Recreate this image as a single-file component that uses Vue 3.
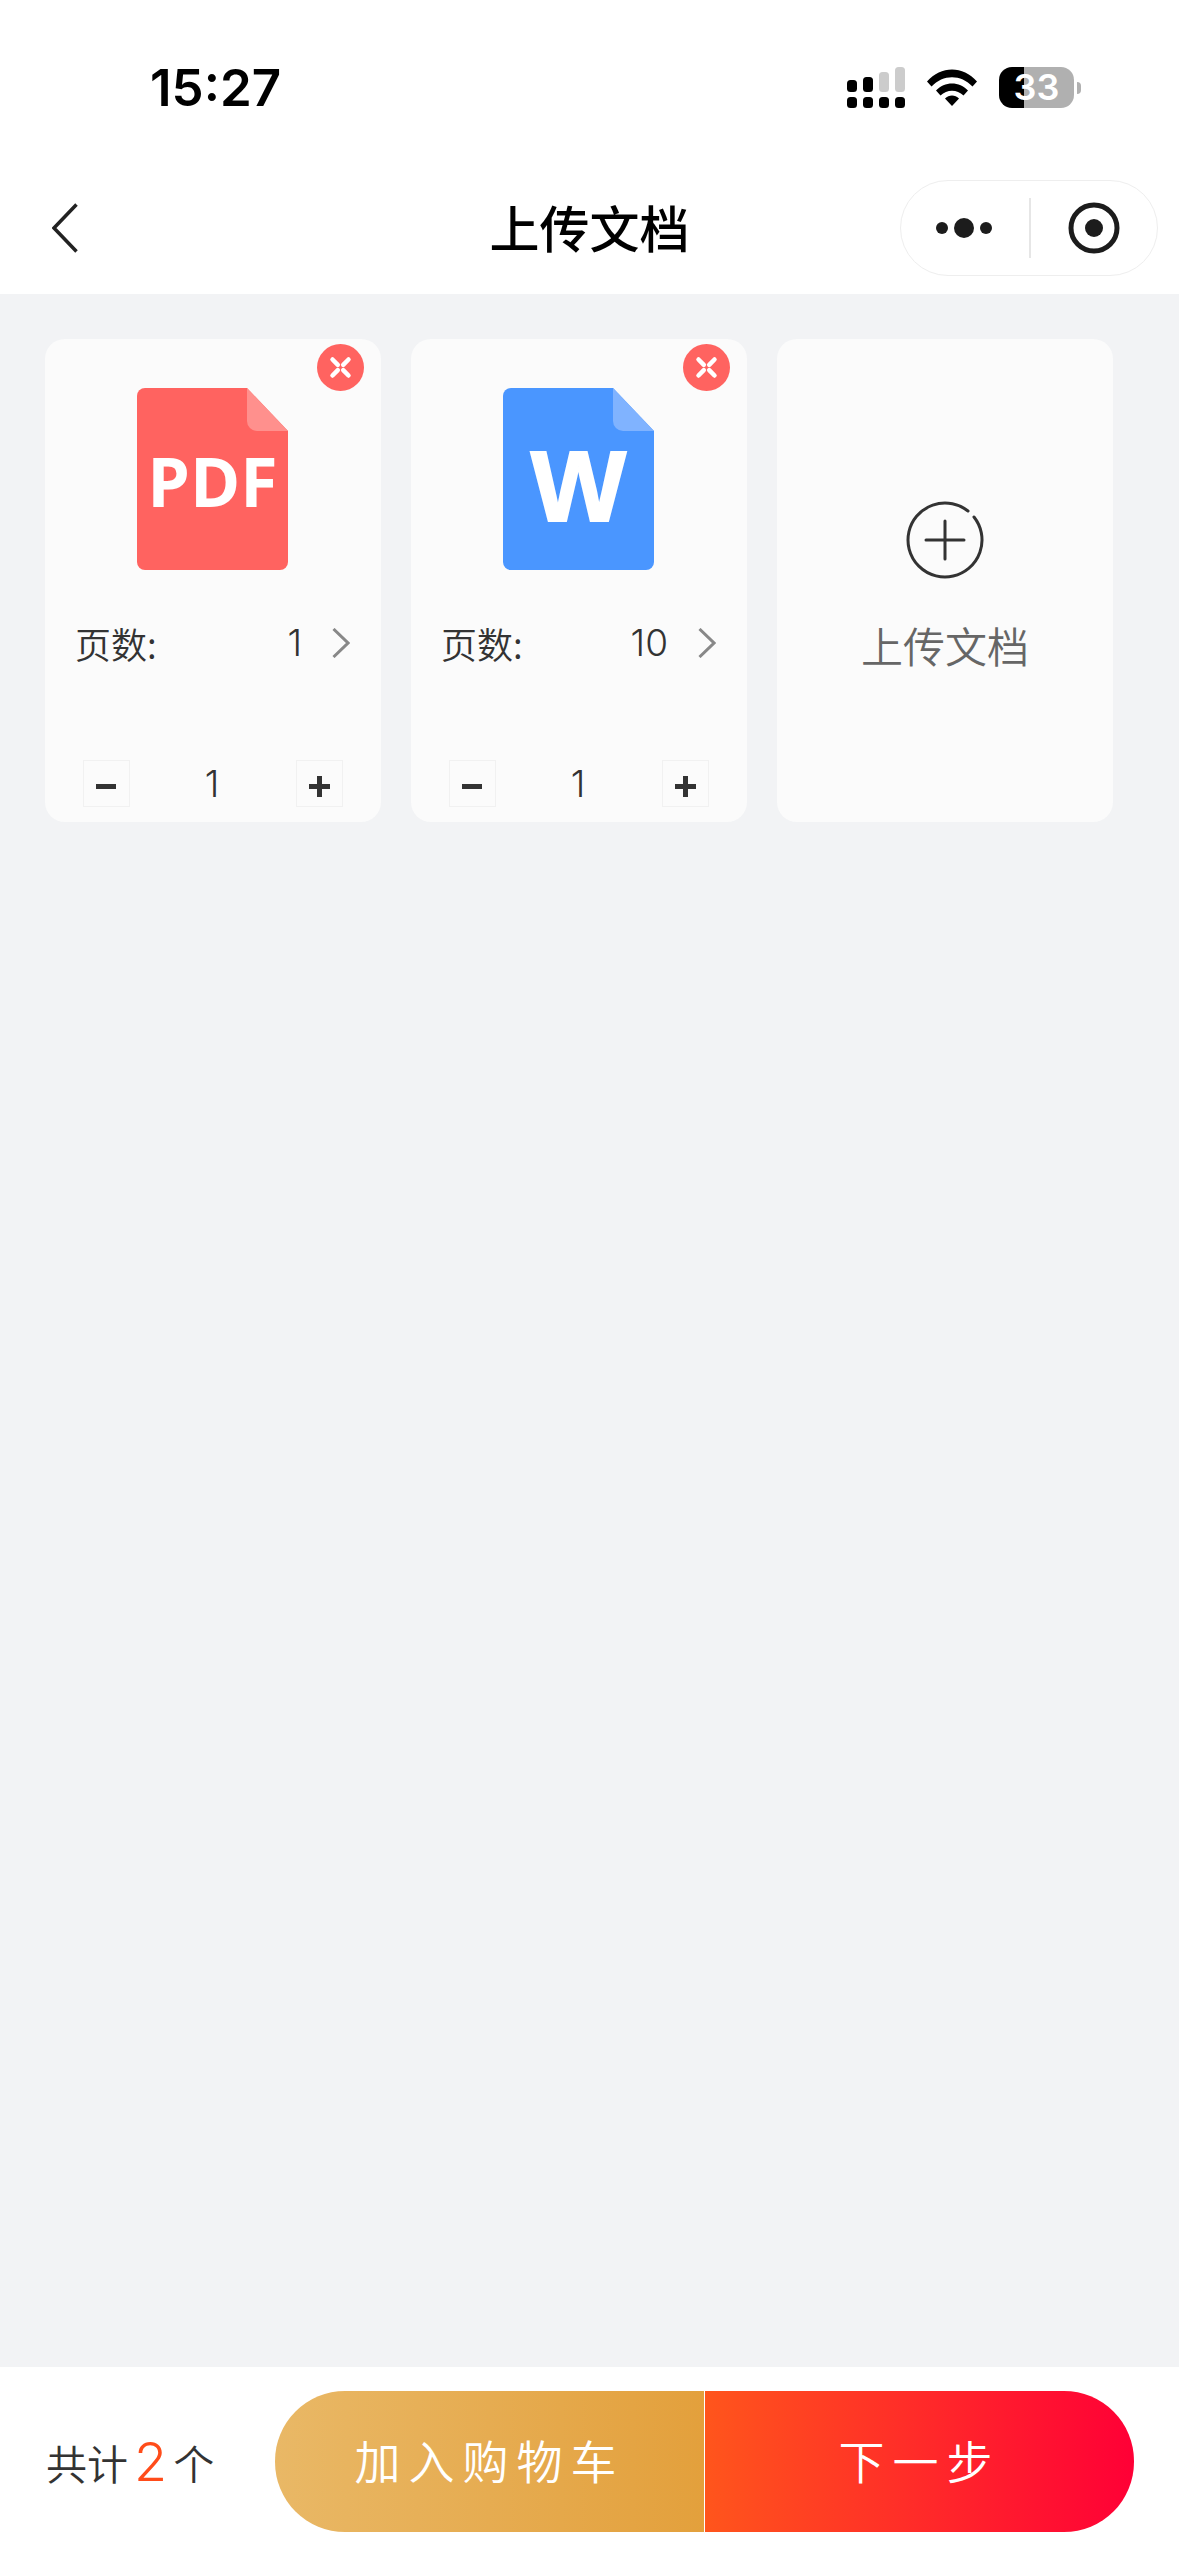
<script setup>
import { ref } from 'vue';

const docs = ref([
  { id: 1, type: 'pdf', pages: 1, copies: 1 },
  { id: 2, type: 'word', pages: 10, copies: 1 }
]);

const changeCopies = (doc, step) => {
  doc.copies = Math.max(1, doc.copies + step);
};

const removeDoc = (id) => {
  docs.value = docs.value.filter((d) => d.id !== id);
};
</script>

<template>
  <div class="page">
    <div class="status-bar">
      <span class="time">15:27</span>
      <div class="status-icons">
        <svg class="signal" width="58" height="41" viewBox="0 0 58 41">
          <rect x="0" y="13" width="10" height="12" rx="3.5" fill="#000" />
          <rect x="16" y="10" width="10" height="15" rx="3.5" fill="#000" />
          <rect x="32" y="5" width="10" height="20" rx="3.5" fill="#ccc" />
          <rect x="48" y="0" width="10" height="25" rx="3.5" fill="#ccc" />
          <rect x="0" y="30" width="10" height="11" rx="3.5" fill="#000" />
          <rect x="16" y="30" width="10" height="11" rx="3.5" fill="#000" />
          <rect x="32" y="30" width="10" height="11" rx="3.5" fill="#000" />
          <rect x="48" y="30" width="10" height="11" rx="3.5" fill="#000" />
        </svg>
        <svg class="wifi" width="50" height="37" viewBox="0 0 50 37">
          <path d="M0 12.500C14 -3.500 36 -3.500 50 12.500L45.500 17.500C34 5 16 5 4.500 17.500Z" fill="#000" />
          <path d="M9 21.500C17.500 12 32.500 12 41 21.500L36.500 26.500C30 20 20 20 13.500 26.500Z" fill="#000" />
          <path d="M18 29.500C22 25.500 28 25.500 32 29.500L25 37Z" fill="#000" />
        </svg>
        <div class="battery">
          <div class="battery-body">
            <span class="battery-text">33</span>
          </div>
          <div class="battery-nub"></div>
        </div>
      </div>
    </div>

    <div class="nav">
      <div class="nav-left">
        <svg width="26" height="50" viewBox="0 0 26 50">
          <path d="M24.500 1.500L2 25L24.500 48.500" fill="none" stroke="#222" stroke-width="3.500" />
        </svg>
      </div>
      <div class="nav-title">上传文档</div>
      <div class="nav-right">
        <div class="capsule">
          <div class="capsule-part more">
            <svg width="58" height="22" viewBox="0 0 58 22">
              <circle cx="6" cy="11" r="6" fill="#1c1c1c" />
              <circle cx="28" cy="11" r="10" fill="#1c1c1c" />
              <circle cx="50" cy="11" r="6" fill="#1c1c1c" />
            </svg>
          </div>
          <div class="capsule-line"></div>
          <div class="capsule-part">
            <svg width="52" height="52" viewBox="0 0 52 52">
              <circle cx="26" cy="26" r="23" fill="none" stroke="#1c1c1c" stroke-width="5" />
              <circle cx="26" cy="26" r="9" fill="#1c1c1c" />
            </svg>
          </div>
        </div>
      </div>
    </div>

    <div class="content">
      <div v-for="doc in docs" :key="doc.id" class="card">
        <button class="close" @click="removeDoc(doc.id)">
          <svg width="47" height="47" viewBox="0 0 47 47">
            <circle cx="23.500" cy="23.500" r="23.500" fill="#ff6360" />
            <path d="M15.500 15.500L20.800 20.800M31.500 15.500L26.200 20.800M15.500 31.500L20.800 26.200M31.500 31.500L26.200 26.200" stroke="#fff" stroke-width="4.500" stroke-linecap="round" />
          </svg>
        </button>
        <svg class="file-icon" width="151" height="182" viewBox="0 0 151 182">
          <template v-if="doc.type === 'pdf'">
            <path d="M8 0H110L151 43V174A8 8 0 0 1 143 182H8A8 8 0 0 1 0 174V8A8 8 0 0 1 8 0Z" fill="#ff6360" />
            <path d="M110 0L151 43H120A10 10 0 0 1 110 33Z" fill="#ff908d" />
            <text x="75.500" y="119" text-anchor="middle" class="pdf-text">PDF</text>
          </template>
          <template v-else>
            <path d="M8 0H110L151 43V174A8 8 0 0 1 143 182H8A8 8 0 0 1 0 174V8A8 8 0 0 1 8 0Z" fill="#4a96ff" />
            <path d="M110 0L151 43H120A10 10 0 0 1 110 33Z" fill="#80b3ff" />
            <text x="75.500" y="133" text-anchor="middle" class="word-text">W</text>
          </template>
        </svg>
        <div class="pages-row">
          <span class="pages-label">页数:</span>
          <span class="pages-value">{{ doc.pages }}</span>
          <svg width="18" height="30" viewBox="0 0 18 30">
            <path d="M1.500 1L16 15L1.500 29" fill="none" stroke="#888" stroke-width="3" />
          </svg>
        </div>
        <div class="stepper">
          <button class="step-btn minus" @click="changeCopies(doc, -1)">
            <svg width="20" height="5" viewBox="0 0 20 5"><rect width="20" height="5" fill="#333" /></svg>
          </button>
          <span class="step-value">{{ doc.copies }}</span>
          <button class="step-btn" @click="changeCopies(doc, 1)">
            <svg width="21" height="21" viewBox="0 0 21 21"><path d="M0 10.500H21M10.500 0V21" stroke="#333" stroke-width="5" /></svg>
          </button>
        </div>
      </div>

      <div class="card upload">
        <svg width="80" height="80" viewBox="0 0 80 80">
          <path d="M63 11A37 37 0 1 0 69 17" fill="none" stroke="#333" stroke-width="3" stroke-linecap="round" />
          <path d="M21 40H59M40 21V59" stroke="#333" stroke-width="3" stroke-linecap="round" />
        </svg>
        <div class="upload-text">上传文档</div>
      </div>
    </div>

    <div class="footer">
      <div class="total">
        <span>共计</span><span class="total-num">{{ docs.length }}</span><span>个</span>
      </div>
      <div class="actions">
        <button class="action-btn cart">加入购物车</button>
        <button class="action-btn next">下一步</button>
      </div>
    </div>
  </div>
</template>

<style scoped>
.page {
  width: 1179px;
  height: 2556px;
  display: flex;
  flex-direction: column;
  background: #f2f3f5;
  font-family: "Noto Sans CJK SC", "Noto Sans", sans-serif;
  color: #333;
  overflow: hidden;
}

.status-bar {
  display: flex;
  justify-content: space-between;
  align-items: center;
  height: 41px;
  padding: 67px 98px 16px 150px;
  background: #fff;
}

.time {
  font-family: Inter, sans-serif;
  font-size: 51px;
  font-weight: 600;
  color: #000;
}

.status-icons {
  display: flex;
  align-items: center;
  gap: 22px;
}

.battery {
  display: flex;
  align-items: center;
  gap: 3px;
}

.battery-body {
  width: 75px;
  height: 41px;
  border-radius: 13px;
  background: linear-gradient(90deg, #000 25px, #b0b0b0 25px);
  display: flex;
  align-items: center;
  justify-content: center;
}

.battery-text {
  font-family: Inter, sans-serif;
  font-size: 36px;
  font-weight: 600;
  color: #fff;
  line-height: 41px;
}

.battery-nub {
  width: 4px;
  height: 12px;
  border-radius: 0 6px 6px 0;
  background: #b0b0b0;
}

.nav {
  display: grid;
  grid-template-columns: 1fr auto 1fr;
  align-items: center;
  padding: 56px 0 18px;
  background: #fff;
}

.nav-left {
  padding-left: 52px;
  display: flex;
  align-items: center;
}

.nav-title {
  font-size: 50px;
  font-weight: 500;
  line-height: 92px;
  padding-bottom: 4px;
  color: #000;
}

.nav-right {
  display: flex;
  justify-content: flex-end;
  padding-right: 21px;
}

.capsule {
  display: flex;
  align-items: center;
  box-sizing: border-box;
  width: 258px;
  height: 96px;
  border: 1.500px solid #eeeeee;
  border-radius: 48px;
  background: #fff;
}

.capsule-part {
  flex: 1;
  display: flex;
  align-items: center;
  justify-content: center;
}

.capsule-part.more {
  flex: 0 0 128px;
}

.capsule-line {
  width: 1.500px;
  height: 60px;
  background: #e6e6e6;
}

.content {
  flex: 1;
  display: grid;
  grid-template-columns: repeat(3, 336px);
  grid-auto-rows: 483px;
  gap: 30px;
  padding: 45px;
}

.card {
  position: relative;
  display: flex;
  flex-direction: column;
  align-items: center;
  border-radius: 20px;
  background: #fbfbfb;
}

.close {
  position: absolute;
  top: 5px;
  right: 17px;
  width: 47px;
  height: 47px;
  padding: 0;
  border: none;
  background: none;
  display: flex;
}

.file-icon {
  flex: none;
  margin: 49px 1px 0 0;
}

.pdf-text {
  font-family: "Open Sans", sans-serif;
  font-size: 68px;
  font-weight: 700;
  fill: #fff;
}

.word-text {
  font-family: "Liberation Sans", sans-serif;
  font-size: 101px;
  font-weight: 700;
  fill: #fff;
  stroke: #fff;
  stroke-width: 2px;
}

.pages-row {
  align-self: stretch;
  display: flex;
  align-items: center;
  height: 50px;
  margin-top: 48px;
  padding: 0 31px 0 30px;
  font-size: 36px;
  font-weight: 350;
  line-height: 50px;
}

.pages-label {
  flex: 1;
}

.pages-value {
  margin-right: 30px;
  font-family: Inter, sans-serif;
  font-size: 37px;
  font-weight: 300;
}

.stepper {
  align-self: stretch;
  display: flex;
  align-items: center;
  justify-content: space-between;
  margin-top: auto;
  padding: 0 38px 15px;
}

.step-btn {
  display: flex;
  align-items: center;
  justify-content: center;
  box-sizing: border-box;
  width: 47px;
  height: 47px;
  padding: 5px 0 0;
  border: 1.500px solid #f1f1f1;
  background: none;
}

.step-btn.minus {
  padding-right: 2px;
}

.step-value {
  font-family: Inter, sans-serif;
  font-size: 37px;
  font-weight: 300;
  line-height: 47px;
  margin-right: 2px;
}

.upload {
  justify-content: flex-start;
  padding-top: 161px;
  box-sizing: border-box;
}

.upload-text {
  margin-top: 37px;
  font-size: 42px;
  font-weight: 350;
  line-height: 56px;
  color: #666;
}

.footer {
  display: flex;
  align-items: center;
  justify-content: space-between;
  height: 189px;
  padding: 0 45px 0 46px;
  box-sizing: border-box;
  background: #fff;
}

.total {
  display: flex;
  align-items: center;
  gap: 6px;
  font-size: 41px;
  font-weight: 350;
}

.total-num {
  font-family: Inter, sans-serif;
  font-size: 54px;
  font-weight: 300;
  color: #ff4c1a;
}

.actions {
  display: flex;
  gap: 1px;
}

.action-btn {
  height: 141px;
  width: 429px;
  padding: 0 0 5px;
  border: none;
  font-family: inherit;
  font-size: 46px;
  font-weight: 350;
  letter-spacing: 8px;
  color: #fff;
}

.cart {
  border-radius: 70px 0 0 70px;
  background: linear-gradient(90deg, #e9b866, #e3a03c);
}

.next {
  border-radius: 0 70px 70px 0;
  background: linear-gradient(90deg, #ff551c, #ff0036);
}
</style>

<style>
html, body {
  margin: 0;
  background: #f2f3f5;
}
</style>
